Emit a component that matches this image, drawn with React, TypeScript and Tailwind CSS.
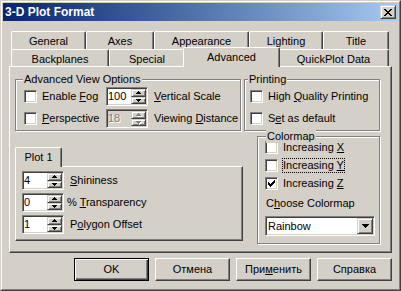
import React from "react";

const RAISED =
  "border border-t-white border-l-white border-r-[#404040] border-b-[#404040] shadow-[inset_-1px_-1px_0_#808080]";
const BTN3D =
  "border border-t-[#D4D0C8] border-l-[#D4D0C8] border-r-[#404040] border-b-[#404040] shadow-[inset_1px_1px_0_#fff,inset_-1px_-1px_0_#808080]";
const SUNKEN =
  "border border-t-[#808080] border-l-[#808080] border-r-white border-b-white shadow-[inset_1px_1px_0_#404040,inset_-1px_-1px_0_#D4D0C8]";
const ETCHED = "border border-[#808080] shadow-[inset_1px_1px_0_#fff,1px_1px_0_#fff]";
const TAB =
  "border-l border-t border-r border-l-white border-t-white border-r-[#404040] rounded-t-[2px] shadow-[inset_-1px_0_0_#808080] bg-[#D4D0C8]";

function Check({ checked = false }: { checked?: boolean }) {
  const cols = [2, 3, 4, 3, 2, 1, 0];
  return (
    <div className={`w-[13px] h-[13px] shrink-0 bg-white ${SUNKEN} flex items-center justify-center`}>
      {checked && (
        <svg width="7" height="7" viewBox="0 0 7 7" shapeRendering="crispEdges" className="block">
          {cols.map((y, i) => (
            <rect key={i} x={i} y={y} width="1" height="3" fill="#000" />
          ))}
        </svg>
      )}
    </div>
  );
}

function Arrow({ dir, disabled }: { dir: "up" | "down"; disabled?: boolean }) {
  const d = dir === "up" ? "M2 0h1v1h1v1h1v1H0V2h1V1h1z" : "M0 0h5v1H4v1H3v1H2V2H1V1H0z";
  return (
    <svg width="6" height="4" viewBox="0 0 6 4" shapeRendering="crispEdges" className="block">
      {disabled && <path d={d} fill="#fff" transform="translate(1 1)" />}
      <path d={d} fill={disabled ? "#808080" : "#000"} />
    </svg>
  );
}

function Spin({ value, disabled = false }: { value: string; disabled?: boolean }) {
  return (
    <div
      className={`w-[42px] h-[19px] shrink-0 p-px flex ${SUNKEN} ${disabled ? "bg-[#D4D0C8]" : "bg-white"}`}
    >
      <div
        className={`flex-1 flex items-center ${disabled ? "text-[#808080] [text-shadow:1px_1px_0_#fff]" : ""}`}
      >
        {value}
      </div>
      <div className="w-[15px] flex flex-col">
        <div className={`h-[8px] ${BTN3D} bg-[#D4D0C8] flex items-center justify-center pl-px`}>
          <Arrow dir="up" disabled={disabled} />
        </div>
        <div className={`h-[7px] ${BTN3D} bg-[#D4D0C8] flex items-center justify-center pl-px`}>
          <Arrow dir="down" disabled={disabled} />
        </div>
      </div>
    </div>
  );
}

function Group({
  label,
  className,
  labelClass,
  children,
}: {
  label: string;
  className: string;
  labelClass: string;
  children: React.ReactNode;
}) {
  return (
    <div className={`relative shrink-0 ${ETCHED} ${className}`}>
      <span className={`absolute -top-[7px] px-px bg-[#D4D0C8] leading-[13px] ${labelClass}`}>{label}</span>
      {children}
    </div>
  );
}

function Tab({
  children,
  className,
  selected = false,
}: {
  children: React.ReactNode;
  className: string;
  selected?: boolean;
}) {
  return (
    <div
      className={`${TAB} flex justify-center items-center shrink-0 ${
        selected ? "relative z-10 h-[20px] -mb-px" : "h-full pt-[2px]"
      } ${className}`}
    >
      {children}
    </div>
  );
}

function Button({ children, isDefault = false }: { children: React.ReactNode; isDefault?: boolean }) {
  return (
    <div
      className={`w-[75px] h-[23px] flex items-center justify-center bg-[#D4D0C8] ${
        isDefault
          ? "border border-black shadow-[inset_1px_1px_0_#fff,inset_-1px_-1px_0_#404040,inset_-2px_-2px_0_#808080]"
          : RAISED
      }`}
    >
      {children}
    </div>
  );
}

export default function App() {
  return (
    <div className="w-[401px] h-[291px] overflow-hidden bg-[#D4D0C8] border border-t-[#D4D0C8] border-l-[#D4D0C8] border-r-[#404040] border-b-[#404040] font-['Liberation_Sans',Arial,sans-serif] text-[11px] leading-[13px] text-black select-none">
      <div className="h-full border border-t-white border-l-white border-r-[#808080] border-b-[#808080] p-px flex flex-col">
        {/* Title bar */}
        <div className="h-[18px] shrink-0 flex items-center justify-between bg-linear-to-r from-[#0A246A] to-[#A6CAF0] pl-[2px] pr-[2px]">
          <span className="text-white font-bold text-[12px] leading-[14px]">3-D Plot Format</span>
          <div className={`w-[16px] h-[14px] ${BTN3D} bg-[#D4D0C8] flex items-center justify-center`}>
            <svg width="8" height="7" viewBox="0 0 8 7" shapeRendering="crispEdges" className="block">
              <path
                d="M0 0h2v1H0z M6 0h2v1H6z M1 1h2v1H1z M5 1h2v1H5z M2 2h4v1H2z M3 3h2v1H3z M2 4h4v1H2z M1 5h2v1H1z M5 5h2v1H5z M0 6h2v1H0z M6 6h2v1H6z"
                fill="#000"
              />
            </svg>
          </div>
        </div>

        {/* Tabs + panel */}
        <div className="px-[6px] pt-[10px]">
          <div className="ml-[2px] w-[378px]">
            <div className="flex h-[18px]">
              <Tab className="w-[75px]">General</Tab>
              <Tab className="w-[68px]">Axes</Tab>
              <Tab className="w-[95px]">Appearance</Tab>
              <Tab className="w-[74px]">Lighting</Tab>
              <Tab className="w-[66px]">Title</Tab>
            </div>
            <div className="flex h-[17px] items-end">
              <Tab className="w-[98px]">Backplanes</Tab>
              <Tab className="w-[76px]">Special</Tab>
              <Tab className="w-[97px] -mx-[2px]" selected>
                Advanced
              </Tab>
              <Tab className="w-[111px]">QuickPlot Data</Tab>
            </div>
          </div>

          <div className={`h-[187px] ${RAISED} flex pl-[5px] pt-[12px]`}>
            {/* Left column */}
            <div className="w-[228px] shrink-0 flex flex-col">
              <Group label="Advanced View Options" className="w-[226px] h-[52px]" labelClass="left-[7px]">
                <div className="pt-[7px] pl-[8px] flex flex-col gap-[3px]">
                  <div className="h-[19px] flex items-center">
                    <div className="w-[82px] flex items-center">
                      <Check />
                      <span className="ml-[5px]">
                        Enable <u>F</u>og
                      </span>
                    </div>
                    <Spin value="100" />
                    <span className="ml-[6px]">
                      <u>V</u>ertical Scale
                    </span>
                  </div>
                  <div className="h-[19px] flex items-center">
                    <div className="w-[82px] flex items-center">
                      <Check />
                      <span className="ml-[5px]">
                        <u>P</u>erspective
                      </span>
                    </div>
                    <Spin value="18" disabled />
                    <span className="ml-[6px]">
                      Viewing <u>D</u>istance
                    </span>
                  </div>
                </div>
              </Group>

              <div className="mt-[16px] flex flex-col">
                <div className={`${TAB} relative z-10 h-[20px] -mb-px w-[47px] flex items-center justify-center`}>
                  Plot 1
                </div>
                <div className={`h-[75px] ${RAISED} pl-[6px] pt-[4px] flex flex-col gap-[3px]`}>
                  <div className="h-[19px] flex items-center">
                    <Spin value="4" />
                    <span className="ml-[6px]">
                      <u>S</u>hininess
                    </span>
                  </div>
                  <div className="h-[19px] flex items-center">
                    <Spin value="0" />
                    <span className="ml-[3px]">
                      % <u>T</u>ransparency
                    </span>
                  </div>
                  <div className="h-[19px] flex items-center">
                    <Spin value="1" />
                    <span className="ml-[6px]">
                      P<u>o</u>lygon Offset
                    </span>
                  </div>
                </div>
              </div>
            </div>

            {/* Right column */}
            <div className="ml-px w-[136px] shrink-0 flex flex-col">
              <Group label="Printing" className="w-[136px] h-[52px]" labelClass="left-[3px]">
                <div className="pt-[7px] pl-[5px] flex flex-col gap-[3px]">
                  <div className="h-[19px] flex items-center">
                    <Check />
                    <span className="ml-[5px]">
                      High <u>Q</u>uality Printing
                    </span>
                  </div>
                  <div className="h-[19px] flex items-center">
                    <Check />
                    <span className="ml-[5px]">
                      S<u>e</u>t as default
                    </span>
                  </div>
                </div>
              </Group>

              <Group label="Colormap" className="ml-[13px] mt-[5px] w-[123px] h-[108px]" labelClass="left-[8px]">
                <div className="pt-px pl-[7px] flex flex-col">
                  <div className="h-[18px] flex items-center">
                    <Check />
                    <span className="ml-[5px]">
                      Increasing <u>X</u>
                    </span>
                  </div>
                  <div className="h-[18px] flex items-center">
                    <Check />
                    <span className="ml-[5px] outline-1 outline-dotted outline-black">
                      Increasing <u>Y</u>
                    </span>
                  </div>
                  <div className="h-[18px] flex items-center">
                    <Check checked />
                    <span className="ml-[5px]">
                      Increasing <u>Z</u>
                    </span>
                  </div>
                  <div className="h-[18px] mt-[2px] flex items-center pl-px">
                    C<u>h</u>oose Colormap
                  </div>
                  <div className={`mt-[4px] w-[110px] h-[20px] bg-white ${SUNKEN} p-px flex`}>
                    <div className="flex-1 flex items-center pl-px">Rainbow</div>
                    <div className={`w-[16px] h-full ${BTN3D} bg-[#D4D0C8] flex items-center justify-center`}>
                      <svg width="7" height="4" viewBox="0 0 7 4" shapeRendering="crispEdges" className="block">
                        <path d="M0 0h7v1H6v1H5v1H4v1H3V3H2V2H1V1H0z" fill="#000" />
                      </svg>
                    </div>
                  </div>
                </div>
              </Group>
            </div>
          </div>
        </div>

        {/* Buttons */}
        <div className="flex justify-end gap-[6px] px-[6px] mt-[5px]">
          <Button isDefault>OK</Button>
          <Button>Отмена</Button>
          <Button>
            При<u>м</u>енить
          </Button>
          <Button>Справка</Button>
        </div>
      </div>
    </div>
  );
}
